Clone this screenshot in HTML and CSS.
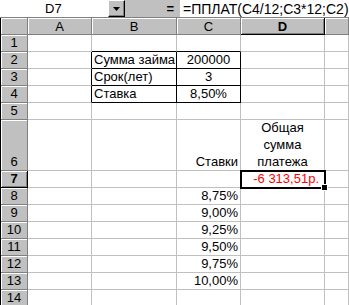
FILE: index.html
```html
<!DOCTYPE html>
<html>
<head>
	<title>Excel - ППЛАТ</title>
	<link rel="stylesheet" href="styles.css">
</head>
<body>
	<div class="window">
		<div class="formula-bar">
			<div class="name-box"><span class="name-text">D7</span></div>
			<div class="drop-btn">
				<svg width="7" height="4" viewBox="0 0 7 4"><path d="M0 0h7L3.5 4z" fill="#000"/></svg>
			</div>
			<div class="bar-gap"><span class="eq">=</span></div>
			<div class="formula">=ППЛАТ(C4/12;C3*12;C2)</div>
		</div>

		<div class="sheet">
			<!-- column headers -->
			<div class="hd corner"></div>
			<div class="hd">A</div>
			<div class="hd">B</div>
			<div class="hd">C</div>
			<div class="hd active">D</div>
			<div class="hd"></div>

			<!-- row 1 -->
			<div class="rh">1</div>
			<div class="c"></div>
			<div class="c bb"></div>
			<div class="c bb"></div>
			<div class="c"></div>
			<div class="c"></div>

			<!-- row 2 -->
			<div class="rh">2</div>
			<div class="c br"></div>
			<div class="c br bb">Сумма займа</div>
			<div class="c br bb center">200000</div>
			<div class="c"></div>
			<div class="c"></div>

			<!-- row 3 -->
			<div class="rh">3</div>
			<div class="c br"></div>
			<div class="c br bb">Срок(лет)</div>
			<div class="c br bb center">3</div>
			<div class="c"></div>
			<div class="c"></div>

			<!-- row 4 -->
			<div class="rh">4</div>
			<div class="c br"></div>
			<div class="c br bb">Ставка</div>
			<div class="c br bb center">8,50%</div>
			<div class="c"></div>
			<div class="c"></div>

			<!-- row 5 -->
			<div class="rh">5</div>
			<div class="c"></div>
			<div class="c"></div>
			<div class="c"></div>
			<div class="c"></div>
			<div class="c"></div>

			<!-- row 6 -->
			<div class="rh">6</div>
			<div class="c"></div>
			<div class="c"></div>
			<div class="c right">Ставки</div>
			<div class="c wrap">Общая сумма платежа</div>
			<div class="c"></div>

			<!-- row 7 -->
			<div class="rh active">7</div>
			<div class="c"></div>
			<div class="c"></div>
			<div class="c"></div>
			<div class="c right red selected">-6 313,51р.</div>
			<div class="c"></div>

			<!-- rows 8-14 -->
			<div class="rh">8</div>
			<div class="c"></div><div class="c"></div><div class="c right">8,75%</div><div class="c"></div><div class="c"></div>
			<div class="rh">9</div>
			<div class="c"></div><div class="c"></div><div class="c right">9,00%</div><div class="c"></div><div class="c"></div>
			<div class="rh">10</div>
			<div class="c"></div><div class="c"></div><div class="c right">9,25%</div><div class="c"></div><div class="c"></div>
			<div class="rh">11</div>
			<div class="c"></div><div class="c"></div><div class="c right">9,50%</div><div class="c"></div><div class="c"></div>
			<div class="rh">12</div>
			<div class="c"></div><div class="c"></div><div class="c right">9,75%</div><div class="c"></div><div class="c"></div>
			<div class="rh">13</div>
			<div class="c"></div><div class="c"></div><div class="c right">10,00%</div><div class="c"></div><div class="c"></div>
			<div class="rh">14</div>
			<div class="c"></div><div class="c"></div><div class="c"></div><div class="c"></div><div class="c"></div>
		</div>
	</div>
</body>
</html>
```

FILE: styles.css
```css
body{
	margin: 0;
	padding: 0;
	background: #fff;
	font-family: 'Liberation Sans', Arial, sans-serif;
	font-size: 13px;
	color: #000;
}
.window{
	width: 349px;
	height: 305px;
	overflow: hidden;
}

/* formula bar */
.formula-bar{
	display: flex;
	height: 18px;
	box-sizing: border-box;
	border-bottom: 1px solid #808080;
	background: #c0c0c0;
}
.name-box{
	flex: none;
	width: 108px;
	background: #fff;
	display: flex;
	align-items: center;
	padding-left: 45px;
	box-sizing: border-box;
}
.drop-btn{
	flex: none;
	width: 17px;
	display: flex;
	align-items: center;
	justify-content: center;
	box-sizing: border-box;
	background: #c0c0c0;
	border-top: 1px solid #fff;
	border-left: 1px solid #fff;
	border-right: 1px solid #000;
	border-bottom: 1px solid #000;
	box-shadow: inset -1px -1px #808080;
}
.bar-gap{
	flex: none;
	width: 55px;
	display: flex;
	align-items: center;
	justify-content: flex-end;
	padding-right: 6px;
	box-sizing: border-box;
}
.eq{
	font-weight: bold;
	font-size: 13px;
}
.formula{
	flex: 1;
	min-width: 0;
	background: #fff;
	display: flex;
	align-items: center;
	padding-left: 3px;
	font-size: 14px;
	white-space: nowrap;
}

/* sheet grid */
.sheet{
	display: grid;
	grid-template-columns: 27px 64px 85px 64px 84px 1fr;
	grid-template-rows: 17px 17px 17px 17px 17px 17px 51px repeat(8, 17px);
	border-left: 1px solid #000;
}
.hd, .rh{
	background: #c0c0c0;
	box-sizing: border-box;
	border-right: 1px solid #808080;
	border-bottom: 1px solid #808080;
	box-shadow: inset 1px 1px #fff;
	display: flex;
	justify-content: center;
	align-items: center;
	font-size: 13px;
}
.rh{
	align-items: flex-end;
	padding-bottom: 1px;
}
.hd.active, .rh.active{
	font-weight: bold;
	border-right: 1px solid #000;
	border-bottom: 1px solid #000;
	box-shadow: inset 1px 1px #fff, inset -1px -1px #808080;
}
.c{
	box-sizing: border-box;
	border-right: 1px solid #c0c0c0;
	border-bottom: 1px solid #c0c0c0;
	display: flex;
	align-items: flex-end;
	padding: 0 2px 1px;
	white-space: nowrap;
	overflow: hidden;
}
.c.br{
	border-right-color: #000;
}
.c.bb{
	border-bottom-color: #000;
}
.center{
	justify-content: center;
}
.right{
	justify-content: flex-end;
}
.wrap{
	white-space: normal;
	text-align: center;
	justify-content: center;
	line-height: 17px;
	padding: 0 12px 0;
}
.red{
	color: #f00;
}
.selected{
	position: relative;
	overflow: visible;
	padding-right: 5px;
}
.selected::after{
	content: "";
	position: absolute;
	left: -1px;
	top: -1px;
	right: -2px;
	bottom: -2px;
	border: 2px solid #000;
}
.selected::before{
	content: "";
	position: absolute;
	right: -4px;
	bottom: -4px;
	width: 5px;
	height: 5px;
	background: #000;
	border: 1px solid #fff;
	z-index: 1;
}
```
